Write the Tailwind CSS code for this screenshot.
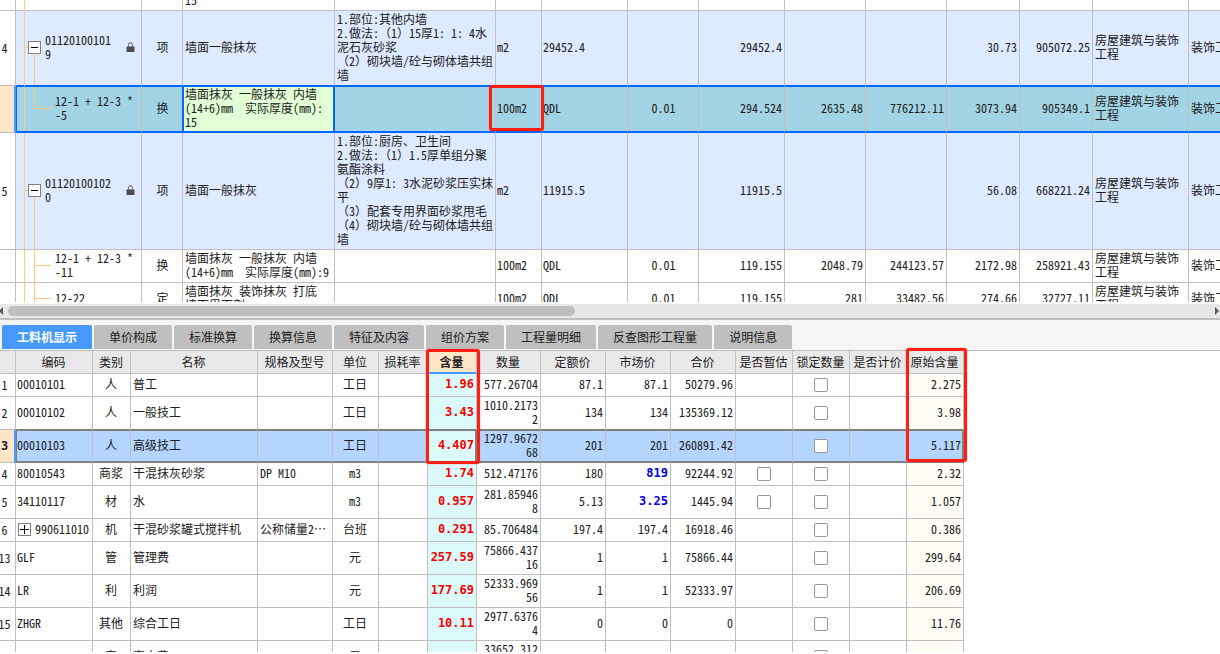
<!DOCTYPE html>
<html lang="zh-CN">
<head>
<meta charset="utf-8">
<meta name="viewport" content="width=device-width, initial-scale=1">
<title>工料机显示</title>
<script src="https://cdn.jsdelivr.net/npm/@tailwindcss/browser@4"></script>
</head>
<body class="bg-white">
<div class="relative flex h-screen flex-col overflow-hidden pb-[2px] font-['Noto_Sans_Mono_CJK_SC','Noto_Sans_CJK_SC',monospace] text-xs leading-[14px] text-[#202020]">

  <!-- Bill of quantities -->
  <section class="h-[302px] shrink-0 overflow-hidden" aria-label="清单">
    <table class="-mt-[36px] w-0 table-fixed border-separate border-spacing-0 whitespace-nowrap [&_td]:border-r [&_td]:border-b [&_td]:border-[#bfbfbf] [&_td]:p-0 [&_td]:pl-px [&_td:nth-child(1)]:pl-0 [&_td:nth-child(n+2)]:pb-[2px] [&_td:nth-child(2)]:relative [&_td:nth-child(3)]:text-center [&_td:nth-child(4)]:pl-[2px] [&_td:nth-child(5)]:pl-[2px] [&_td:nth-child(8)]:text-center [&_td:nth-child(n+9):nth-child(-n+13)]:pr-[2px] [&_td:nth-child(n+9):nth-child(-n+13)]:text-right [&_td:nth-child(n+14)]:pl-[2px]">
      <colgroup>
        <col class="w-[16px]"><col class="w-[126px]"><col class="w-[41px]"><col class="w-[152px]"><col class="w-[161px]"><col class="w-[46px]"><col class="w-[86px]"><col class="w-[71px]"><col class="w-[86px]"><col class="w-[81px]"><col class="w-[81px]"><col class="w-[73px]"><col class="w-[73px]"><col class="w-[96px]"><col class="w-[96px]">
      </colgroup>
      <tbody>
        <tr class="h-[47px]">
          <td></td>
          <td><span class="absolute top-0 -bottom-px left-[8px] w-px bg-[#ffc880]"></span></td>
          <td></td><td class="pb-[3px]! align-bottom">15</td><td></td><td></td><td></td><td></td><td></td><td></td><td></td><td></td><td></td><td></td><td></td>
        </tr>
        <tr class="h-[75px] bg-[#deeaff] [&_td:nth-child(n+2)]:border-b-[#0068ff]">
          <td class="bg-white"><div class="flex w-[9px] justify-center">4</div></td>
          <td>
            <span class="absolute top-0 -bottom-px left-[8px] w-px bg-[#ffc880]"></span>
            <span class="absolute top-[36px] left-[8px] h-px w-[5px] bg-[#ffc880]"></span>
            <span class="absolute top-1/2 bottom-0 left-[18px] w-px bg-[#ffc880]"></span>
            <div class="relative flex items-center pl-[11px]">
              <button type="button" aria-label="折叠" class="flex size-[13px] items-center justify-center border border-[#808080] bg-white"><span class="h-px w-[7px] bg-black"></span></button>
              <span class="ml-[4px] w-[81px]">01120100101<br>9</span>
              <svg class="size-[10px]" viewBox="0 0 10 10" aria-label="锁定"><path d="M2.5 5V3a2 2.3 0 0 1 4 0V5" fill="none" stroke="#808080" stroke-width="1.2"/><rect x="0.5" y="4.5" width="8" height="5.5" rx="0.7" fill="#4d4d4d"/></svg>
            </div>
          </td>
          <td>项</td><td>墙面一般抹灰</td>
          <td>1.部位:其他内墙<br>2.做法:（1）15厚1: 1: 4水<br>泥石灰砂浆<br>（2）砌块墙/砼与砌体墙共组<br>墙</td>
          <td>m2</td><td>29452.4</td><td></td><td>29452.4</td><td></td><td></td><td>30.73</td><td>905072.25</td><td>房屋建筑与装饰<br>工程</td><td>装饰工程</td>
        </tr>
        <tr class="h-[47px] bg-[#a3d4e6] [&_td:nth-child(n+2)]:border-t [&_td:nth-child(n+2)]:border-b-2 [&_td:nth-child(n+2)]:border-t-[#0068ff] [&_td:nth-child(n+2)]:border-b-[#0068ff]">
          <td class="border-r-2! border-r-[#4599ff]! bg-[#ffe6c8]"></td>
          <td class="border-l border-l-[#0068ff]!">
            <span class="absolute top-0 bottom-0 left-[7px] w-px bg-[#ffc880]"></span>
            <span class="absolute top-0 left-[17px] h-[22px] w-[17px] border-b border-l border-[#ffc880]"></span>
            <div class="pl-[37px]">12-1 + 12-3 *<br>-5</div>
          </td>
          <td class="border-r-[#0068ff]!">换</td>
          <td class="border-r-2! border-l border-r-[#0068ff]! border-l-[#0068ff]! bg-[#e3ffd6] pl-px!">墙面抹灰 一般抹灰 内墙<br>(14+6)mm&nbsp; 实际厚度(mm):<br>15</td>
          <td></td><td>100m2</td><td>QDL</td><td>0.01</td><td>294.524</td><td>2635.48</td><td>776212.11</td><td>3073.94</td><td>905349.1</td><td>房屋建筑与装饰<br>工程</td><td>装饰工程</td>
        </tr>
        <tr class="h-[117px] bg-[#deeaff]">
          <td class="bg-white"><div class="flex w-[9px] justify-center">5</div></td>
          <td>
            <span class="absolute top-0 -bottom-px left-[8px] w-px bg-[#ffc880]"></span>
            <span class="absolute top-[57px] left-[8px] h-px w-[5px] bg-[#ffc880]"></span>
            <span class="absolute top-1/2 -bottom-px left-[18px] w-px bg-[#ffc880]"></span>
            <div class="relative flex items-center pl-[11px]">
              <button type="button" aria-label="折叠" class="flex size-[13px] items-center justify-center border border-[#808080] bg-white"><span class="h-px w-[7px] bg-black"></span></button>
              <span class="ml-[4px] w-[81px]">01120100102<br>0</span>
              <svg class="size-[10px]" viewBox="0 0 10 10" aria-label="锁定"><path d="M2.5 5V3a2 2.3 0 0 1 4 0V5" fill="none" stroke="#808080" stroke-width="1.2"/><rect x="0.5" y="4.5" width="8" height="5.5" rx="0.7" fill="#4d4d4d"/></svg>
            </div>
          </td>
          <td>项</td><td>墙面一般抹灰</td>
          <td>1.部位:厨房、卫生间<br>2.做法:（1）1.5厚单组分聚<br>氨酯涂料<br>（2）9厚1: 3水泥砂浆压实抹<br>平<br>（3）配套专用界面砂浆甩毛<br>（4）砌块墙/砼与砌体墙共组<br>墙</td>
          <td>m2</td><td>11915.5</td><td></td><td>11915.5</td><td></td><td></td><td>56.08</td><td>668221.24</td><td>房屋建筑与装饰<br>工程</td><td>装饰工程</td>
        </tr>
        <tr class="h-[33px]">
          <td></td>
          <td>
            <span class="absolute top-0 -bottom-px left-[8px] w-px bg-[#ffc880]"></span>
            <span class="absolute top-0 -bottom-px left-[18px] w-px bg-[#ffc880]"></span>
            <span class="absolute top-[15px] left-[18px] h-px w-[17px] bg-[#ffc880]"></span>
            <div class="pl-[38px]">12-1 + 12-3 *<br>-11</div>
          </td>
          <td>换</td><td>墙面抹灰 一般抹灰 内墙<br>(14+6)mm&nbsp; 实际厚度(mm):9</td>
          <td></td><td>100m2</td><td>QDL</td><td>0.01</td><td>119.155</td><td>2048.79</td><td>244123.57</td><td>2172.98</td><td>258921.43</td><td>房屋建筑与装饰<br>工程</td><td>装饰工程</td>
        </tr>
        <tr class="h-[33px]">
          <td></td>
          <td>
            <span class="absolute top-0 -bottom-px left-[8px] w-px bg-[#ffc880]"></span>
            <span class="absolute top-0 -bottom-px left-[18px] w-px bg-[#ffc880]"></span>
            <span class="absolute top-[15px] left-[18px] h-px w-[17px] bg-[#ffc880]"></span>
            <div class="pl-[38px]">12-22</div>
          </td>
          <td>定</td><td>墙面抹灰 装饰抹灰 打底<br>墙面界面剂</td>
          <td></td><td>100m2</td><td>QDL</td><td>0.01</td><td>119.155</td><td>281</td><td>33482.56</td><td>274.66</td><td>32727.11</td><td>房屋建筑与装饰<br>工程</td><td>装饰工程</td>
        </tr>
      </tbody>
    </table>
  </section>

  <!-- Horizontal scrollbar -->
  <div class="mt-[2px] flex h-[16px] shrink-0 items-center justify-between border-b-2 border-[#bfbfbf] bg-[#e7e7e7]">
    <svg class="h-[8px] w-[4px]" viewBox="0 0 4 8"><path d="M3 0v8L-1 4z" fill="#5a5a5a"/></svg>
    <div class="ml-[4px] flex-1"><div class="h-[10px] w-[47%] rounded-full bg-[#bfbfbf]"></div></div>
    <svg class="h-[8px] w-[5px]" viewBox="0 0 5 8"><path d="M0 0v8l4-4z" fill="#5a5a5a"/></svg>
  </div>

  <!-- Tabs -->
  <nav class="flex shrink-0 gap-[2px] border-b border-[#bfbfbf] bg-[#f5f5f5] px-[2px] pt-[5px] pb-px font-['Noto_Sans_CJK_SC',sans-serif] [&_button]:h-[24px] [&_button]:rounded-t-[2px] [&_button]:px-[15px] [&_button]:whitespace-nowrap">
    <button type="button" class="bg-[#4599ff] font-bold text-white">工料机显示</button>
    <button type="button" class="bg-[#bfbfbf]">单价构成</button>
    <button type="button" class="bg-[#bfbfbf]">标准换算</button>
    <button type="button" class="bg-[#bfbfbf]">换算信息</button>
    <button type="button" class="bg-[#bfbfbf]">特征及内容</button>
    <button type="button" class="bg-[#bfbfbf]">组价方案</button>
    <button type="button" class="bg-[#bfbfbf]">工程量明细</button>
    <button type="button" class="bg-[#bfbfbf]">反查图形工程量</button>
    <button type="button" class="bg-[#bfbfbf]">说明信息</button>
  </nav>

  <!-- Labour, material and machine detail -->
  <section class="min-h-0 flex-1 overflow-hidden" aria-label="工料机显示">
    <table class="w-0 table-fixed border-separate border-spacing-0 whitespace-nowrap [&_td]:border-r [&_td]:border-b [&_td]:border-[#bfbfbf] [&_td]:p-0 [&_td:nth-child(2)]:pl-px [&_td:nth-child(n+2):nth-child(-n+12)]:pb-[2px] [&_td:nth-child(3)]:pr-px [&_td:nth-child(3)]:text-center [&_td:nth-child(4)]:pl-[2px] [&_td:nth-child(5)]:pl-[2px] [&_td:nth-child(6)]:pr-px [&_td:nth-child(6)]:text-center [&_td:nth-child(8)]:bg-[#dcf9f9] [&_td:nth-child(8)]:font-['DejaVu_Sans_Mono',monospace] [&_td:nth-child(8)]:font-bold [&_td:nth-child(8)]:text-[#f50000] [&_td:nth-child(n+8):nth-child(-n+12)]:pr-[2px] [&_td:nth-child(n+8):nth-child(-n+12)]:text-right [&_td:nth-child(14)]:pr-px [&_td:nth-child(13)]:pr-px [&_td:nth-child(16)]:bg-[#fffbf5] [&_td:nth-child(16)]:pr-[2px] [&_td:nth-child(16)]:pb-[2px] [&_td:nth-child(16)]:text-right [&_th]:border-r [&_th]:border-b [&_th]:border-[#bfbfbf] [&_th]:bg-[#e8e8e8] [&_th]:p-0 [&_th]:pr-px [&_th]:font-normal [&_input]:mx-auto [&_input]:block [&_input]:size-[14px] [&_input]:appearance-none [&_input]:rounded-[2px] [&_input]:border [&_input]:border-[#999999] [&_input]:bg-white">
      <colgroup>
        <col class="w-[16px]"><col class="w-[77px]"><col class="w-[38px]"><col class="w-[127px]"><col class="w-[75px]"><col class="w-[46px]"><col class="w-[49px]"><col class="w-[49px]"><col class="w-[64px]"><col class="w-[65px]"><col class="w-[65px]"><col class="w-[65px]"><col class="w-[57px]"><col class="w-[57px]"><col class="w-[57px]"><col class="w-[57px]">
      </colgroup>
      <thead>
        <tr class="h-[23px]">
          <th></th><th>编码</th><th>类别</th><th>名称</th><th>规格及型号</th><th>单位</th><th>损耗率</th>
          <th class="border-b-2! border-b-[#4599ff]! bg-[#ffe6c8]! font-bold!">含量</th>
          <th>数量</th><th>定额价</th><th>市场价</th><th>合价</th><th>是否暂估</th><th>锁定数量</th><th>是否计价</th><th>原始含量</th>
        </tr>
      </thead>
      <tbody>
        <tr class="h-[23px]"><td><div class="flex w-[9px] justify-center">1</div></td><td>00010101</td><td>人</td><td>普工</td><td></td><td>工日</td><td></td><td>1.96</td><td>577.26704</td><td>87.1</td><td>87.1</td><td>50279.96</td><td></td><td><input type="checkbox" aria-label="锁定数量 1"></td><td></td><td>2.275</td></tr>
        <tr class="h-[33px] [&_td:nth-child(n+2)]:border-b-[#808080]"><td><div class="flex w-[9px] justify-center">2</div></td><td>00010102</td><td>人</td><td>一般技工</td><td></td><td>工日</td><td></td><td>3.43</td><td>1010.2173<br>2</td><td>134</td><td>134</td><td>135369.12</td><td></td><td><input type="checkbox" aria-label="锁定数量 2"></td><td></td><td>3.98</td></tr>
        <tr class="h-[33px] bg-[#b3d5ff] [&_td:nth-child(n+2)]:border-t [&_td:nth-child(n+2)]:border-b-2 [&_td:nth-child(n+2)]:border-t-[#808080] [&_td:nth-child(n+2)]:border-b-[#808080]"><td class="border-r-2! border-r-[#4599ff]! bg-[#ffe6c8] font-['DejaVu_Sans_Mono',monospace] font-bold"><div class="flex w-[9px] justify-center">3</div></td><td class="border-l border-l-[#808080]! pl-0!">00010103</td><td>人</td><td>高级技工</td><td></td><td>工日</td><td></td><td class="border-r-2! border-r-[#808080]! pr-px!">4.407</td><td>1297.9672<br>68</td><td>201</td><td>201</td><td>260891.42</td><td></td><td><input type="checkbox" aria-label="锁定数量 3"></td><td></td><td class="border-r-2! border-r-[#808080]! bg-[#b3d5ff]! pr-px!">5.117</td></tr>
        <tr class="h-[23px]"><td><div class="flex w-[9px] justify-center">4</div></td><td>80010543</td><td>商浆</td><td>干混抹灰砂浆</td><td>DP M10</td><td>m3</td><td></td><td>1.74</td><td>512.47176</td><td>180</td><td class="font-['DejaVu_Sans_Mono',monospace] font-bold text-[#0000e6]">819</td><td>92244.92</td><td><input type="checkbox" aria-label="是否暂估 4"></td><td><input type="checkbox" aria-label="锁定数量 4"></td><td></td><td>2.32</td></tr>
        <tr class="h-[33px]"><td><div class="flex w-[9px] justify-center">5</div></td><td>34110117</td><td>材</td><td>水</td><td></td><td>m3</td><td></td><td>0.957</td><td>281.85946<br>8</td><td>5.13</td><td class="font-['DejaVu_Sans_Mono',monospace] font-bold text-[#0000e6]">3.25</td><td>1445.94</td><td><input type="checkbox" aria-label="是否暂估 5"></td><td><input type="checkbox" aria-label="锁定数量 5"></td><td></td><td>1.057</td></tr>
        <tr class="h-[23px]"><td><div class="flex w-[9px] justify-center">6</div></td><td><div class="flex items-center gap-[4px] pl-px"><button type="button" aria-label="展开" class="flex size-[13px] items-center justify-center border border-[#808080] bg-white"><svg class="size-[9px]" viewBox="0 0 9 9" stroke="#000"><path d="M0 4.5h9M4.5 0v9"/></svg></button>990611010</div></td><td>机</td><td>干混砂浆罐式搅拌机</td><td>公称储量2⋯</td><td>台班</td><td></td><td>0.291</td><td>85.706484</td><td>197.4</td><td>197.4</td><td>16918.46</td><td></td><td><input type="checkbox" aria-label="锁定数量 6"></td><td></td><td>0.386</td></tr>
        <tr class="h-[33px]"><td><div class="flex w-[9px] justify-center">13</div></td><td>GLF</td><td>管</td><td>管理费</td><td></td><td>元</td><td></td><td>257.59</td><td>75866.437<br>16</td><td>1</td><td>1</td><td>75866.44</td><td></td><td><input type="checkbox" aria-label="锁定数量 13"></td><td></td><td>299.64</td></tr>
        <tr class="h-[33px]"><td><div class="flex w-[9px] justify-center">14</div></td><td>LR</td><td>利</td><td>利润</td><td></td><td>元</td><td></td><td>177.69</td><td>52333.969<br>56</td><td>1</td><td>1</td><td>52333.97</td><td></td><td><input type="checkbox" aria-label="锁定数量 14"></td><td></td><td>206.69</td></tr>
        <tr class="h-[33px]"><td><div class="flex w-[9px] justify-center">15</div></td><td>ZHGR</td><td>其他</td><td>综合工日</td><td></td><td>工日</td><td></td><td>10.11</td><td>2977.6376<br>4</td><td>0</td><td>0</td><td>0</td><td></td><td><input type="checkbox" aria-label="锁定数量 15"></td><td></td><td>11.76</td></tr>
        <tr class="h-[33px]"><td></td><td></td><td>安</td><td>安文费</td><td></td><td>元</td><td></td><td></td><td>33652.312<br>49</td><td></td><td></td><td></td><td></td><td><input type="checkbox" aria-label="锁定数量 16"></td><td></td><td></td></tr>
      </tbody>
    </table>
  </section>

  <!-- Review marks drawn over the tables -->
  <div class="pointer-events-none absolute top-[85px] left-[489px] h-[46px] w-[55px] rounded-[3px] border-[3px] border-[#ff1e14] shadow-[0_0_1px_#ff1e14]"></div>
  <div class="pointer-events-none absolute top-[349px] left-[426px] h-[115px] w-[54px] rounded-[3px] border-[3px] border-[#ff1e14] shadow-[0_0_1px_#ff1e14]"></div>
  <div class="pointer-events-none absolute top-[348px] left-[906px] h-[114px] w-[61px] rounded-[3px] border-[3px] border-[#ff1e14] shadow-[0_0_1px_#ff1e14]"></div>
</div>
</body>
</html>
